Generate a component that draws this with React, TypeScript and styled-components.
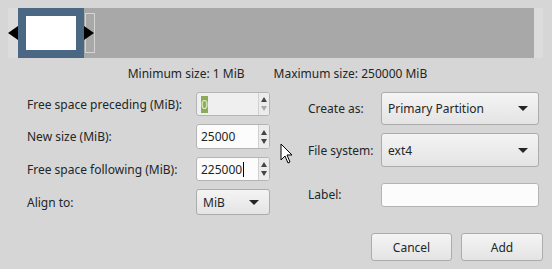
import styled, { createGlobalStyle } from "styled-components";

const Global = createGlobalStyle`
	html, body {
		margin: 0;
		padding: 0;
		background: #d6d6d6;
	}
	body {
		font-family: "Noto Sans", "Open Sans", sans-serif;
		font-size: 12px;
		color: #232627;
	}
`;

const Page = styled.div`
	position: relative;
	width: 552px;
	height: 269px;
	box-sizing: border-box;
	padding: 8px 9px 0 8px;
	display: flex;
	flex-direction: column;
	overflow: hidden;
`;

/* Partition graph */
const Frame = styled.div`
	position: relative;
	height: 50px;
	background: #dcdcdc;
	display: flex;
	padding: 0 9px 0 10px;
`;

const Block = styled.div`
	width: 66px;
	box-sizing: border-box;
	background: #4a6884;
	padding: 8px;
	display: flex;
`;

const BlockInner = styled.div`
	flex: 1;
	background: #ffffff;
`;

const Unallocated = styled.div`
	flex: 1;
	background: #a8a8a8;
`;

const Handle = styled.div<{ $side: "left" | "right" }>`
	position: absolute;
	top: 18px;
	width: 0;
	height: 0;
	border-top: 7px solid transparent;
	border-bottom: 7px solid transparent;
	${(p) =>
		p.$side === "left"
			? "left: 0; border-right: 10px solid #000;"
			: "left: 76px; border-left: 10px solid #000;"}
`;

const Ghost = styled.div`
	position: absolute;
	left: 77px;
	top: 5px;
	width: 10px;
	height: 40px;
	box-sizing: border-box;
	border: 1px solid #d4d4d4;
`;

const Info = styled.div`
	display: flex;
	justify-content: center;
	gap: 29px;
	margin-top: 7px;
	height: 17px;
	line-height: 17px;
	padding-left: 4px;
`;

/* Form */
const Form = styled.div`
	display: flex;
	gap: 38px;
	margin-top: 10px;
	padding-left: 19px;
`;

const Column = styled.div<{ $label: number; $field: number; $rows: string }>`
	display: grid;
	grid-template-columns: ${(p) => p.$label}px ${(p) => p.$field}px;
	grid-template-rows: ${(p) => p.$rows};
	row-gap: 8px;
	align-items: center;
`;

const Label = styled.div<{ $end?: boolean }>`
	white-space: nowrap;
	${(p) => (p.$end ? "align-self: end; line-height: 24px;" : "")}
`;

const Spin = styled.div<{ $dim?: boolean }>`
	height: 100%;
	box-sizing: border-box;
	display: flex;
	border: 1px solid #b4b4b4;
	border-radius: 3px;
	background: ${(p) => (p.$dim ? "#efefef" : "#fcfcfc")};
	overflow: hidden;
`;

const SpinText = styled.div`
	flex: 1;
	display: flex;
	align-items: center;
	padding-left: 4px;
`;

const Selected = styled.span`
	background: #8aab58;
	color: #e4f0d4;
`;

const Caret = styled.span`
	display: inline-block;
	width: 1px;
	height: 15px;
	background: #000;
	vertical-align: middle;
	margin-left: 1px;
`;

const SpinButtons = styled.div`
	width: 10px;
	border-left: 1px solid #d0d0d0;
	background: #ececec;
	display: flex;
	flex-direction: column;
	align-items: center;
	justify-content: center;
	gap: 4px;
`;

const Arrow = styled.div<{ $up?: boolean; $off?: boolean }>`
	width: 0;
	height: 0;
	border-left: 3px solid transparent;
	border-right: 3px solid transparent;
	${(p) =>
		p.$up
			? `border-bottom: 5px solid ${p.$off ? "#aaa" : "#444"};`
			: `border-top: 5px solid ${p.$off ? "#aaa" : "#444"};`}
`;

const Combo = styled.div`
	height: 100%;
	box-sizing: border-box;
	display: flex;
	align-items: center;
	justify-content: space-between;
	padding: 0 10px 0 6px;
	border: 1px solid #acacac;
	border-radius: 3px;
	background: linear-gradient(#f4f4f4, #e4e4e4);
`;

const Drop = styled.div`
	width: 0;
	height: 0;
	border-left: 5px solid transparent;
	border-right: 5px solid transparent;
	border-top: 5px solid #232627;
`;

const Entry = styled.div`
	height: 24px;
	align-self: end;
	box-sizing: border-box;
	border: 1px solid #b4b4b4;
	border-radius: 3px;
	background: #fcfcfc;
`;

const Buttons = styled.div`
	display: flex;
	justify-content: flex-end;
	gap: 9px;
	margin-top: 18px;
`;

const Button = styled.div<{ $w: number }>`
	width: ${(p) => p.$w}px;
	height: 28px;
	box-sizing: border-box;
	display: flex;
	align-items: center;
	justify-content: center;
	border: 1px solid #acacac;
	border-radius: 3px;
	background: linear-gradient(#f4f4f4, #e4e4e4);
`;

const Pointer = styled.svg`
	position: absolute;
	left: 280px;
	top: 143px;
`;

const SpinBox = ({ value, dim, sel, caret }: { value: string; dim?: boolean; sel?: boolean; caret?: boolean }) => (
	<Spin $dim={dim}>
		<SpinText>
			{sel ? <Selected>{value}</Selected> : value}
			{caret && <Caret />}
		</SpinText>
		<SpinButtons>
			<Arrow $up />
			<Arrow $off={dim} />
		</SpinButtons>
	</Spin>
);

const App = () => {
	return (
		<>
			<Global />
			<Page>
				<Frame>
					<Block>
						<BlockInner />
					</Block>
					<Unallocated />
					<Ghost />
					<Handle $side="left" />
					<Handle $side="right" />
				</Frame>

				<Info>
					<span>Minimum size: 1 MiB</span>
					<span>Maximum size: 250000 MiB</span>
				</Info>

				<Form>
					<Column $label={169} $field={74} $rows="24px 25px 24px 26px">
						<Label>Free space preceding (MiB):</Label>
						<SpinBox value="0" dim sel />
						<Label>New size (MiB):</Label>
						<SpinBox value="25000" />
						<Label>Free space following (MiB):</Label>
						<SpinBox value="225000" caret />
						<Label>Align to:</Label>
						<Combo>
							MiB
							<Drop />
						</Combo>
					</Column>
					<Column $label={73} $field={158} $rows="33px 34px 32px">
						<Label>Create as:</Label>
						<Combo>
							Primary Partition
							<Drop />
						</Combo>
						<Label>File system:</Label>
						<Combo>
							ext4
							<Drop />
						</Combo>
						<Label $end>Label:</Label>
						<Entry />
					</Column>
				</Form>

				<Buttons>
					<Button $w={81}>Cancel</Button>
					<Button $w={82}>Add</Button>
				</Buttons>

				<Pointer width="14" height="22" viewBox="0 0 14 22">
					<path d="M1 1 L1 17 L5 13 L8 20 L10 19 L7 12 L12 12 Z" fill="#fff" stroke="#000" strokeWidth="1" />
				</Pointer>
			</Page>
		</>
	);
};

export default App;
